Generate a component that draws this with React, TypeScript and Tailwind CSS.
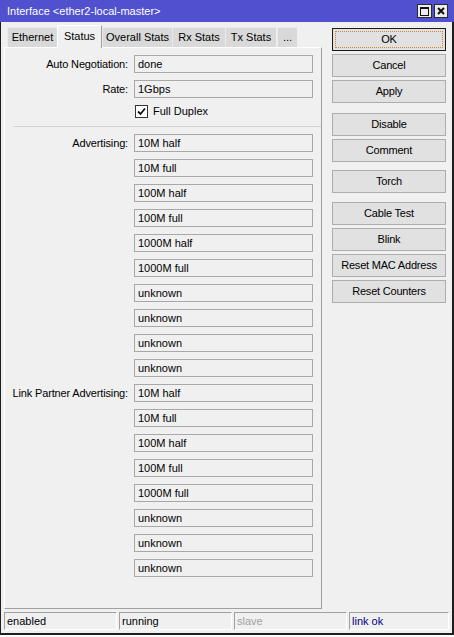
import React from 'react';

const advertising = [
  '10M half',
  '10M full',
  '100M half',
  '100M full',
  '1000M half',
  '1000M full',
  'unknown',
  'unknown',
  'unknown',
  'unknown',
];

const partnerAdvertising = [
  '10M half',
  '10M full',
  '100M half',
  '100M full',
  '1000M full',
  'unknown',
  'unknown',
  'unknown',
];

function FieldRow({ label, value }: { label?: string; value: string }) {
  return (
    <div className="flex h-[18px] items-center">
      <div className="w-[123px] whitespace-nowrap text-right tracking-[-0.15px]">{label ? `${label}:` : ''}</div>
      <div className="ml-[6px] h-[18px] w-[179px] border border-[#a8a8a8] bg-[#f0f0f0] pl-[3px] leading-[16px]">
        {value}
      </div>
    </div>
  );
}

function Tab({ label, width, selected }: { label: string; width: string; selected?: boolean }) {
  if (selected) {
    return (
      <div
        className={`relative z-10 -mb-px flex h-[23px] items-center justify-center border-l border-t border-r border-l-white border-t-white border-r-[#a0a0a0] bg-[#f0f0f0] pb-[2px] ${width}`}
      >
        {label}
      </div>
    );
  }
  return (
    <div
      className={`flex h-[20px] items-center justify-center border-l border-t border-[#eaeaea] bg-[#d9d9d9] ${width}`}
    >
      {label}
    </div>
  );
}

function SideButton({ label, primary, className = '' }: { label: string; primary?: boolean; className?: string }) {
  return (
    <div
      className={`relative flex h-[23px] w-[114px] items-center justify-center border bg-[#e1e1e1] ${
        primary ? 'border-[#1b1b1b]' : 'border-[#adadad]'
      } ${className}`}
    >
      {primary && <span className="absolute inset-[2px] border border-dotted border-[#d2872c]" />}
      <span className="relative tracking-[-0.2px]">{label}</span>
    </div>
  );
}

function StatusCell({ text, className }: { text: string; className: string }) {
  return (
    <div
      className={`h-[18px] border-l border-t border-[#a0a0a0] border-r border-b border-r-white border-b-white pl-[2px] leading-[16px] ${className}`}
    >
      {text}
    </div>
  );
}

export default function App() {
  return (
    <div className="h-[637px] w-[454px] overflow-hidden bg-white font-['Liberation_Sans',Arial,sans-serif] text-[11px] text-black">
      <div className="flex h-[635px] w-[454px] flex-col bg-[#5151cf]">
        {/* Title bar */}
        <div className="flex h-[22px] shrink-0 items-center pl-[7px] pr-[6px] text-[11px] text-white">
          <span>Interface &lt;ether2-local-master&gt;</span>
          <div className="ml-auto flex gap-[2px]">
            <div className="flex h-[14px] w-[15px] items-center justify-center border border-[#2a2a2a] bg-[#ececec]">
              <div className="h-[9px] w-[9px] border border-t-2 border-[#111]" />
            </div>
            <div className="flex h-[14px] w-[14px] items-center justify-center border border-[#2a2a2a] bg-[#ececec]">
              <svg width="8" height="8" viewBox="0 0 8 8">
                <path d="M1 1L7 7M7 1L1 7" stroke="#111" strokeWidth="2" />
              </svg>
            </div>
          </div>
        </div>

        {/* Window body */}
        <div className="flex flex-1 flex-col border-l border-r-2 border-b-2 border-[#1e1e1e] bg-[#f0f0f0]">
          <div className="flex">
            {/* Tabs + panel */}
            <div className="ml-[3px] w-[318px]">
              <div className="flex h-[25px] items-end pl-[3px]">
                <Tab label="Ethernet" width="w-[50px]" />
                <Tab label="Status" width="w-[45px]" selected />
                <Tab label="Overall Stats" width="w-[70px]" />
                <Tab label="Rx Stats" width="w-[53px]" />
                <Tab label="Tx Stats" width="w-[51px]" />
                <Tab label="..." width="w-[20px] ml-[1px]" />
              </div>
              <div className="flex h-[562px] flex-col border-l border-t border-r border-b border-l-white border-t-white border-r-[#a0a0a0] border-b-[#a0a0a0] pt-[7px]">
                <div className="flex flex-col gap-[7px]">
                  <FieldRow label="Auto Negotiation" value="done" />
                  <FieldRow label="Rate" value="1Gbps" />
                  <div className="flex h-[13px] items-center pl-[130px]">
                    <div className="flex h-[13px] w-[13px] items-center justify-center border border-[#333] bg-white">
                      <svg width="9" height="9" viewBox="0 0 9 9">
                        <path d="M1 4.5L3.5 7L8 1.5" fill="none" stroke="#111" strokeWidth="1.8" />
                      </svg>
                    </div>
                    <span className="ml-[5px]">Full Duplex</span>
                  </div>
                  <div className="ml-[8px] mt-[1px] h-px border-t border-[#d2d2d2]" />
                  {advertising.map((v, i) => (
                    <FieldRow key={`a${i}`} label={i === 0 ? 'Advertising' : undefined} value={v} />
                  ))}
                  {partnerAdvertising.map((v, i) => (
                    <FieldRow key={`p${i}`} label={i === 0 ? 'Link Partner Advertising' : undefined} value={v} />
                  ))}
                </div>
              </div>
            </div>

            {/* Side buttons */}
            <div className="ml-[10px] flex flex-col pt-[6px]">
              <div className="flex flex-col gap-[3px]">
                <SideButton label="OK" primary />
                <SideButton label="Cancel" />
                <SideButton label="Apply" />
              </div>
              <div className="mt-[10px] flex flex-col gap-[3px]">
                <SideButton label="Disable" />
                <SideButton label="Comment" />
              </div>
              <SideButton label="Torch" className="mt-[8px]" />
              <div className="mt-[9px] flex flex-col gap-[3px]">
                <SideButton label="Cable Test" />
                <SideButton label="Blink" />
                <SideButton label="Reset MAC Address" />
                <SideButton label="Reset Counters" />
              </div>
            </div>
          </div>

          {/* Status bar */}
          <div className="mt-[3px] flex gap-[2px] pl-[3px]">
            <StatusCell text="enabled" className="w-[113px]" />
            <StatusCell text="running" className="w-[113px]" />
            <StatusCell text="slave" className="w-[113px] text-[#a0a0a0]" />
            <StatusCell text="link ok" className="w-[100px] text-[#000080]" />
          </div>
        </div>
      </div>
    </div>
  );
}
